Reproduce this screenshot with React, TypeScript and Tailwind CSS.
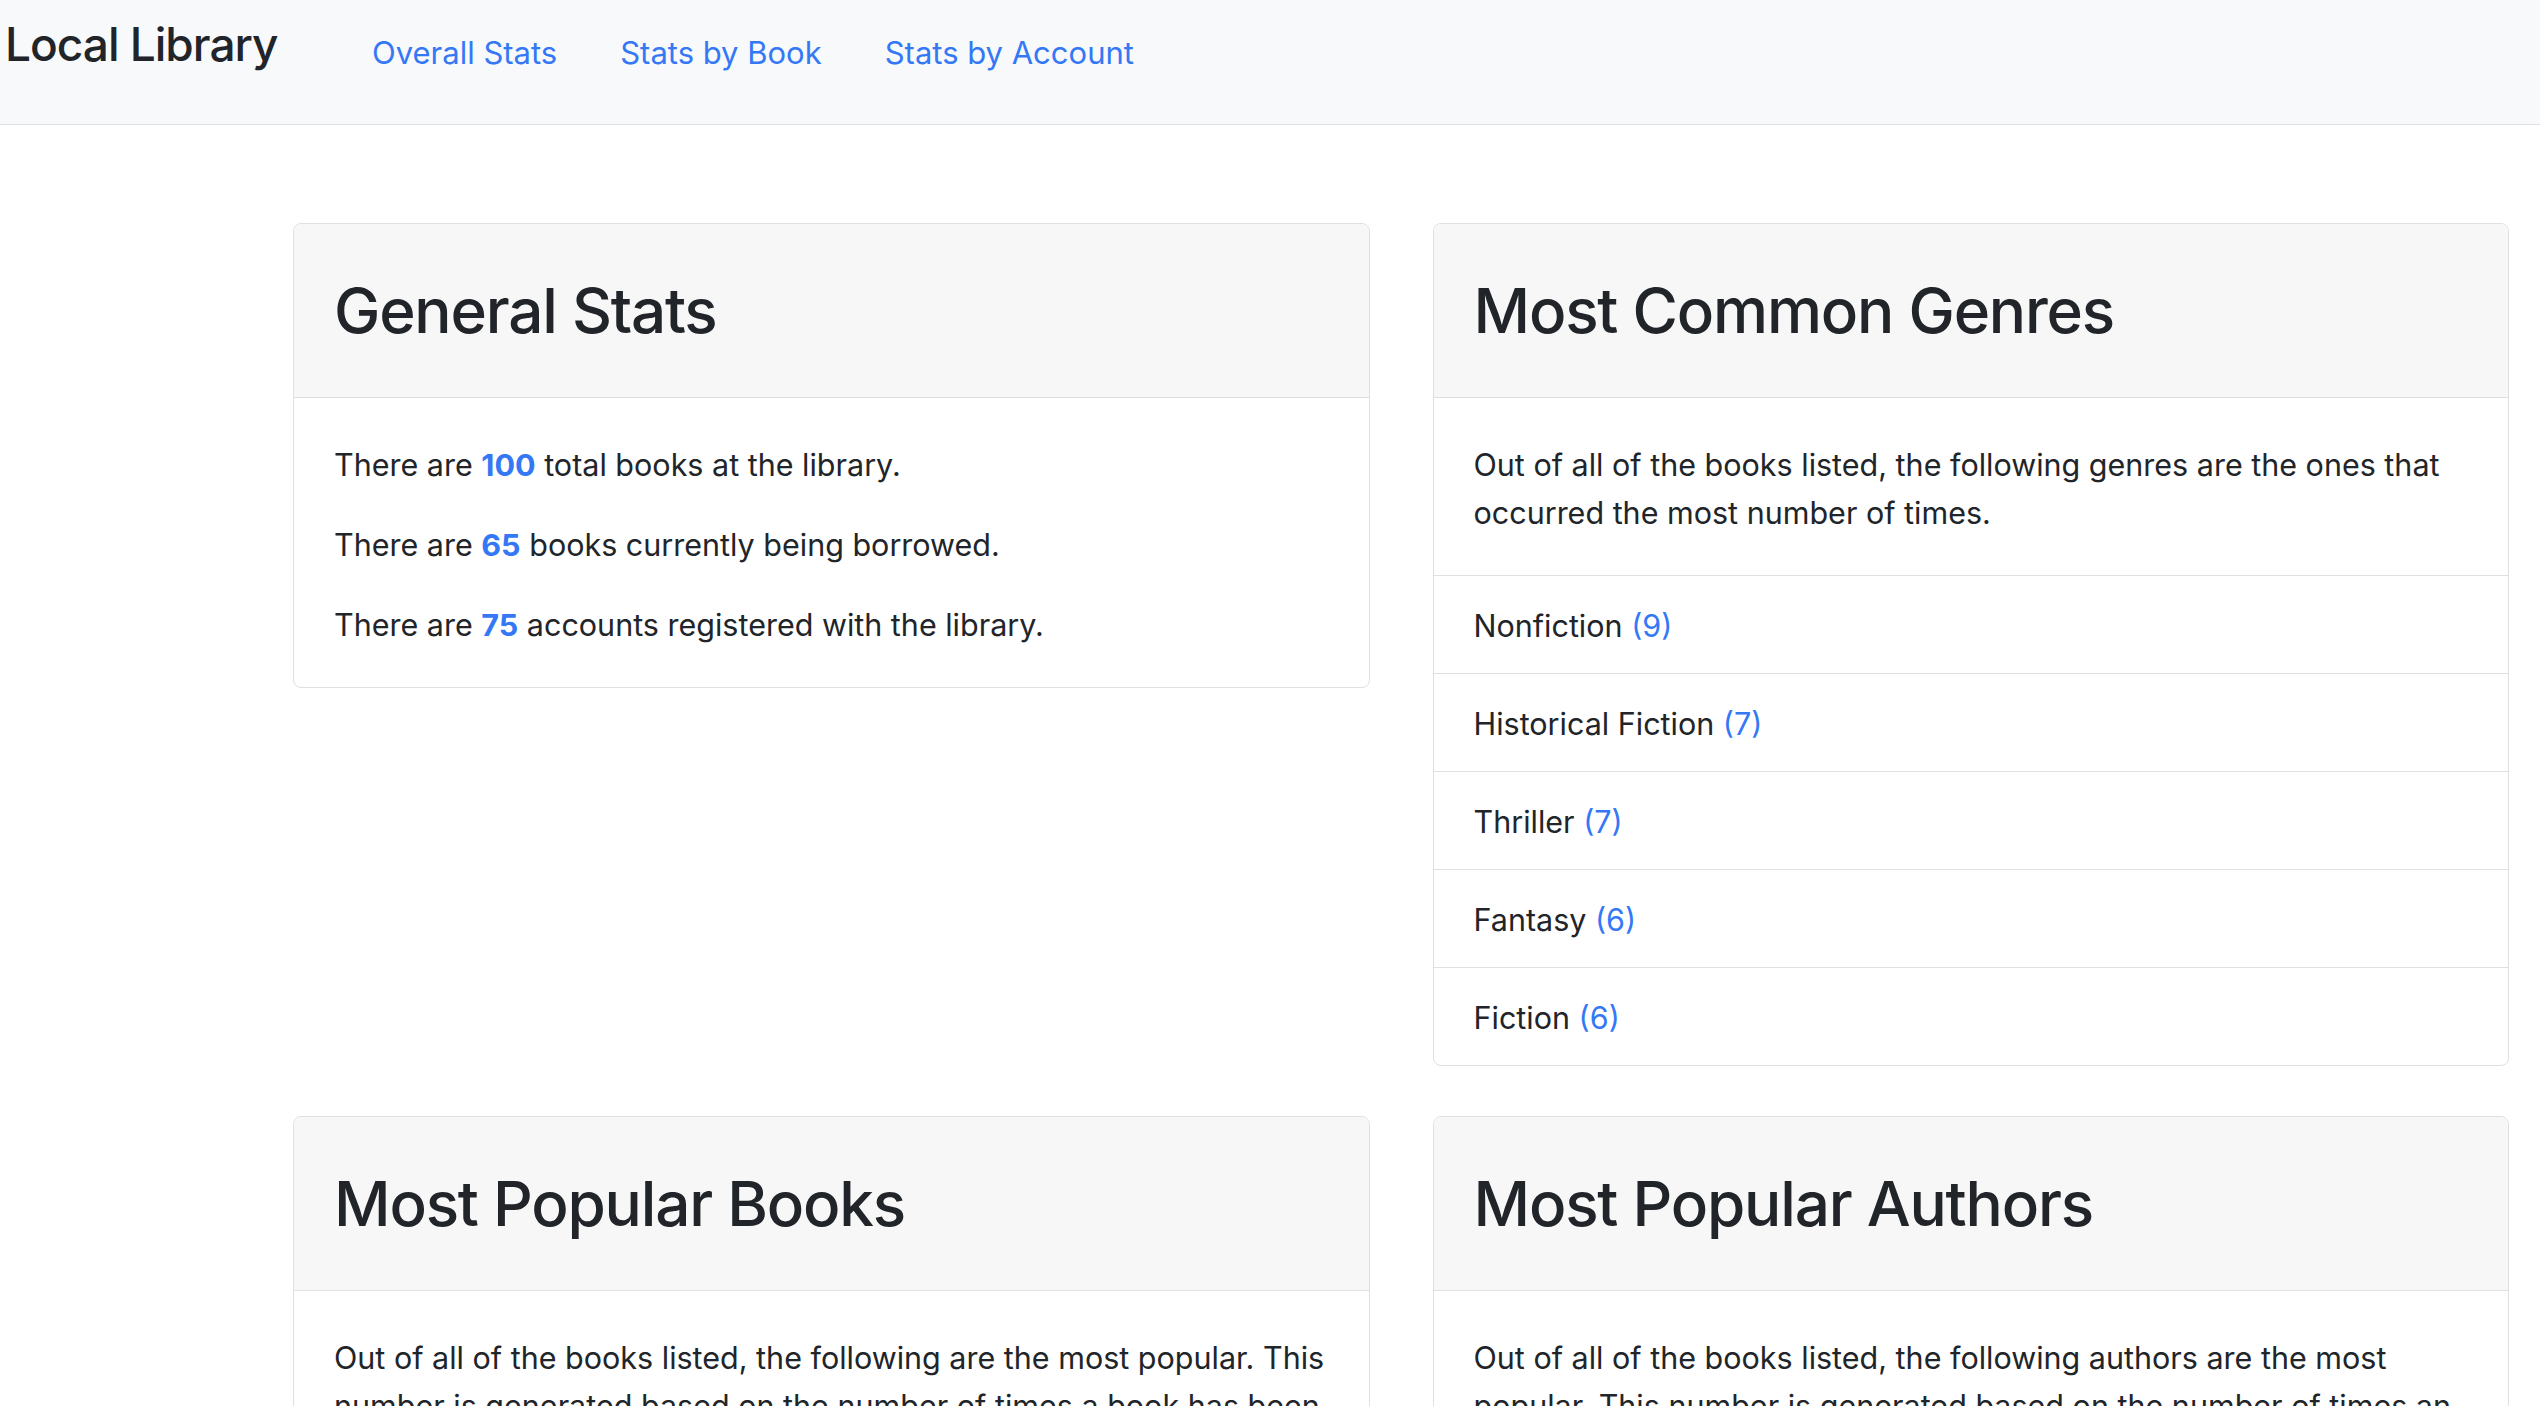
import React from "react";

type Genre = {
  name: string;
  count: number;
};

const genres: Genre[] = [
  { name: "Nonfiction", count: 9 },
  { name: "Historical Fiction", count: 7 },
  { name: "Thriller", count: 7 },
  { name: "Fantasy", count: 6 },
  { name: "Fiction", count: 6 },
];

const Card = ({ title, children }: { title: string; children: React.ReactNode }) => {
  return (
    <section className="bg-white border border-[#e0e0e0] rounded-[8px] overflow-hidden">
      <div className="bg-[#f7f7f7] border-b border-[#e0e0e0] px-[40px] pt-[49px] pb-[47px]">
        <h2 className="text-[62px] leading-[76.8px] font-medium text-[#212529] tracking-[-1.2px]">
          {title}
        </h2>
      </div>
      {children}
    </section>
  );
};

const Stat = ({ value, children }: { value: number; children: React.ReactNode }) => (
  <p className="mb-[32px] last:mb-0">
    There are <span className="font-bold text-[#3478f6]">{value}</span> {children}
  </p>
);

const App = () => {
  return (
    <div
      className="h-[1406px] overflow-hidden bg-white text-[#212529] text-[30.5px] leading-[48px]"
      style={{ fontFamily: "Inter, 'Liberation Sans', sans-serif" }}
    >
      <nav className="h-[125px] bg-[#f8f9fa] border-b border-[#dfe0e5] flex items-start pl-[5px]">
        <div className="w-[367px] mt-[16px] text-[46px] leading-[56px] font-medium text-[#212529] tracking-[-1px]">
          Local Library
        </div>
        <ul className="flex gap-[63px] mt-[29px] text-[31px] text-[#3478f6]">
          <li>Overall Stats</li>
          <li>Stats by Book</li>
          <li>Stats by Account</li>
        </ul>
      </nav>

      <main className="pt-[98px] pl-[293px] pr-[31px] grid grid-cols-2 gap-x-[63px] gap-y-[50px] items-start">
        <Card title="General Stats">
          <div className="pt-[43px] pb-[38px] px-[40px]">
            <Stat value={100}>total books at the library.</Stat>
            <Stat value={65}>books currently being borrowed.</Stat>
            <Stat value={75}>accounts registered with the library.</Stat>
          </div>
        </Card>

        <Card title="Most Common Genres">
          <p className="pt-[43px] pb-[38px] px-[40px]">
            Out of all of the books listed, the following genres are the ones that occurred the most
            number of times.
          </p>
          <ul>
            {genres.map((g) => (
              <li key={g.name} className="border-t border-[#e0e0e0] px-[40px] pt-[26px] pb-[23px]">
                {g.name} <span className="text-[#3478f6]">({g.count})</span>
              </li>
            ))}
          </ul>
        </Card>

        <Card title="Most Popular Books">
          <p className="pt-[43px] pb-[38px] px-[40px]">
            Out of all of the books listed, the following are the most popular. This number is
            generated based on the number of times a book has been borrowed.
          </p>
        </Card>

        <Card title="Most Popular Authors">
          <p className="pt-[43px] pb-[38px] px-[40px]">
            Out of all of the books listed, the following authors are the most popular. This number
            is generated based on the number of times an author's books have been borrowed.
          </p>
        </Card>
      </main>
    </div>
  );
};

export default App;
